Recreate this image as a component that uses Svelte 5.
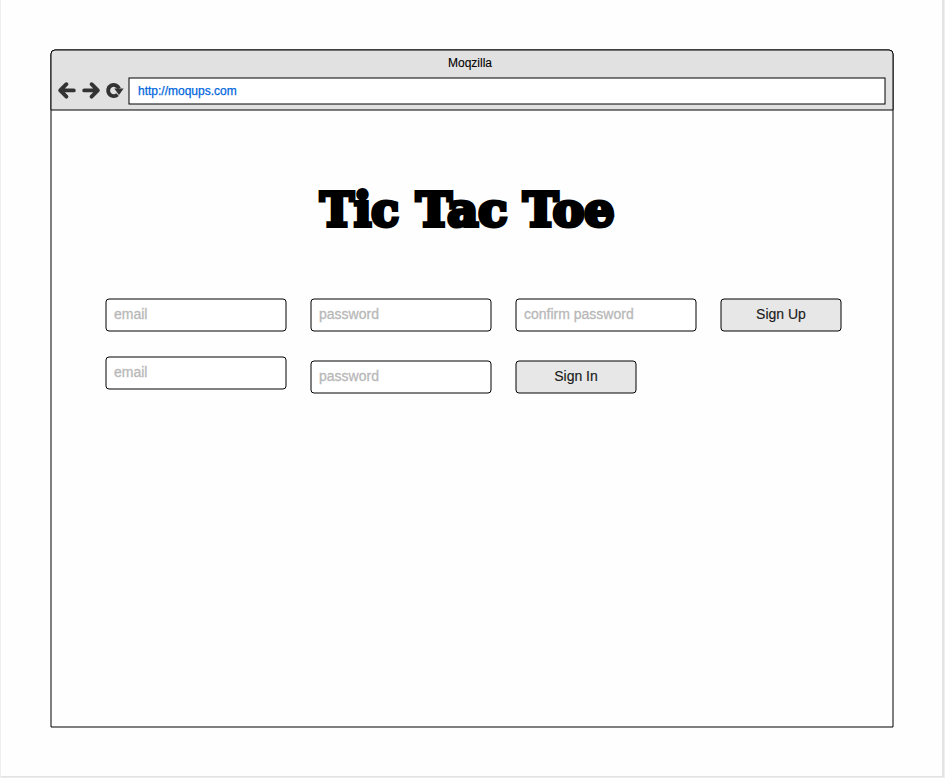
<script>
  const rows = [
    [
      { kind: 'email', label: 'email', width: 180 },
      { kind: 'password', label: 'password', width: 180 },
      { kind: 'password', label: 'confirm password', width: 180 },
      { kind: 'button', label: 'Sign Up', width: 120 }
    ],
    [
      { kind: 'email', label: 'email', width: 180, raised: true },
      { kind: 'password', label: 'password', width: 180 },
      { kind: 'button', label: 'Sign In', width: 120 }
    ]
  ];
</script>

{#snippet frame(w, h, r, fill)}
  <svg class="frame" width={w + 2} height={h + 2} viewBox="-1 -1 {w + 2} {h + 2}" aria-hidden="true">
    <rect width={w} height={h} rx={r} {fill} stroke="#000" />
  </svg>
{/snippet}

<div class="page">
  <main class="window">
    <svg class="frame" width="844" height="679" viewBox="-1 -1 844 679" aria-hidden="true">
      <path d="M0 677V4Q0 0 4 0H838Q842 0 842 4V677Z" fill="#fefefe" stroke="#000" />
      <path d="M0 60V4Q0 0 4 0H838Q842 0 842 4V60Z" fill="#e1e1e1" stroke="#000" />
    </svg>
    <header>
      <div class="title">Moqzilla</div>
      <nav>
        <svg class="icons" width="66" height="20" viewBox="0 0 66 20" fill="none" stroke="#333" stroke-width="3.9" stroke-linecap="round" stroke-linejoin="round">
          <path d="M16.8 10.4H4M9.4 4.2L3.2 10.4L9.4 16.6" />
          <path d="M27.2 10.4H40M34.6 4.2L40.8 10.4L34.6 16.6" />
          <path d="M60.6 14.6A5.6 5.6 0 1 1 62 8.6" stroke-width="3.9" stroke-linecap="butt" />
          <path d="M57.2 8.4H66.6L62 15Z" fill="#333" stroke="none" />
        </svg>
        <div class="url">
          {@render frame(756, 26, 0, '#fff')}
          <span>http://moqups.com</span>
        </div>
      </nav>
    </header>
    <section>
      <h1>
        <svg width="300" height="50" viewBox="0 0 300 50" role="img" aria-label="Tic Tac Toe">
          <text x="3" y="39.4" textLength="79" lengthAdjust="spacingAndGlyphs">Tic</text>
          <text x="99" y="39.4" textLength="91.5" lengthAdjust="spacingAndGlyphs">Tac</text>
          <text x="206" y="39.4" textLength="91.5" lengthAdjust="spacingAndGlyphs">Toe</text>
        </svg>
      </h1>
      {#each rows as row}
        <div class="row">
          {#each row as item}
            <div class="control {item.kind}" class:raised={item.raised} style="width: {item.width}px">
              {@render frame(item.width, 32, 3, item.kind === 'button' ? '#e7e7e7' : '#fff')}
              <span>{item.label}</span>
            </div>
          {/each}
        </div>
      {/each}
    </section>
  </main>
</div>

<style>
  .page {
    box-sizing: border-box;
    width: 945px;
    height: 778px;
    padding: 50px 0 0 50px;
    overflow: hidden;
    background: #fefefe;
    border-left: 1px solid #efefef;
    border-right: 1px solid #f0f0f0;
    border-bottom: 1px solid #ececec;
    box-shadow: inset -2px -1px 0 #e3e3e3;
    font-family: 'Liberation Sans', Arial, sans-serif;
  }
  .window {
    position: relative;
    width: 842px;
    height: 677px;
  }
  .frame {
    position: absolute;
    left: -1px;
    top: -1px;
    overflow: visible;
  }
  header {
    position: relative;
    height: 60px;
  }
  .title {
    height: 28px;
    padding-right: 4px;
    text-align: center;
    font-size: 12px;
    line-height: 26px;
    color: #000;
    -webkit-text-stroke: 0.1px currentColor;
  }
  nav {
    display: flex;
    padding-left: 6px;
  }
  .icons {
    display: block;
    margin-top: 2px;
    overflow: visible;
  }
  .url {
    position: relative;
    width: 756px;
    height: 26px;
    margin-left: 6px;
    font-size: 12px;
    line-height: 26px;
    color: #0066dd;
    -webkit-text-stroke: 0.25px currentColor;
  }
  .url span {
    position: relative;
    padding-left: 9px;
  }
  section {
    position: relative;
    padding-left: 55px;
  }
  h1 {
    height: 189px;
    margin: 0;
    padding: 77px 0 0 211px;
    box-sizing: border-box;
  }
  h1 svg {
    display: block;
    overflow: visible;
  }
  h1 text {
    font: bold 47px 'DejaVu Serif', serif;
    fill: #000;
    stroke: #000;
    stroke-width: 4px;
  }
  .row {
    display: flex;
    gap: 25px;
    height: 62px;
  }
  .control {
    position: relative;
    height: 32px;
    font-size: 14px;
    line-height: 31px;
    color: #b8b8b8;
    -webkit-text-stroke: 0.3px currentColor;
  }
  .control span {
    position: relative;
    padding-left: 8px;
  }
  .raised {
    margin-top: -4px;
  }
  .button {
    text-align: center;
    color: #1a1a1a;
    -webkit-text-stroke-width: 0.15px;
  }
  .button span {
    padding: 0;
  }
</style>
